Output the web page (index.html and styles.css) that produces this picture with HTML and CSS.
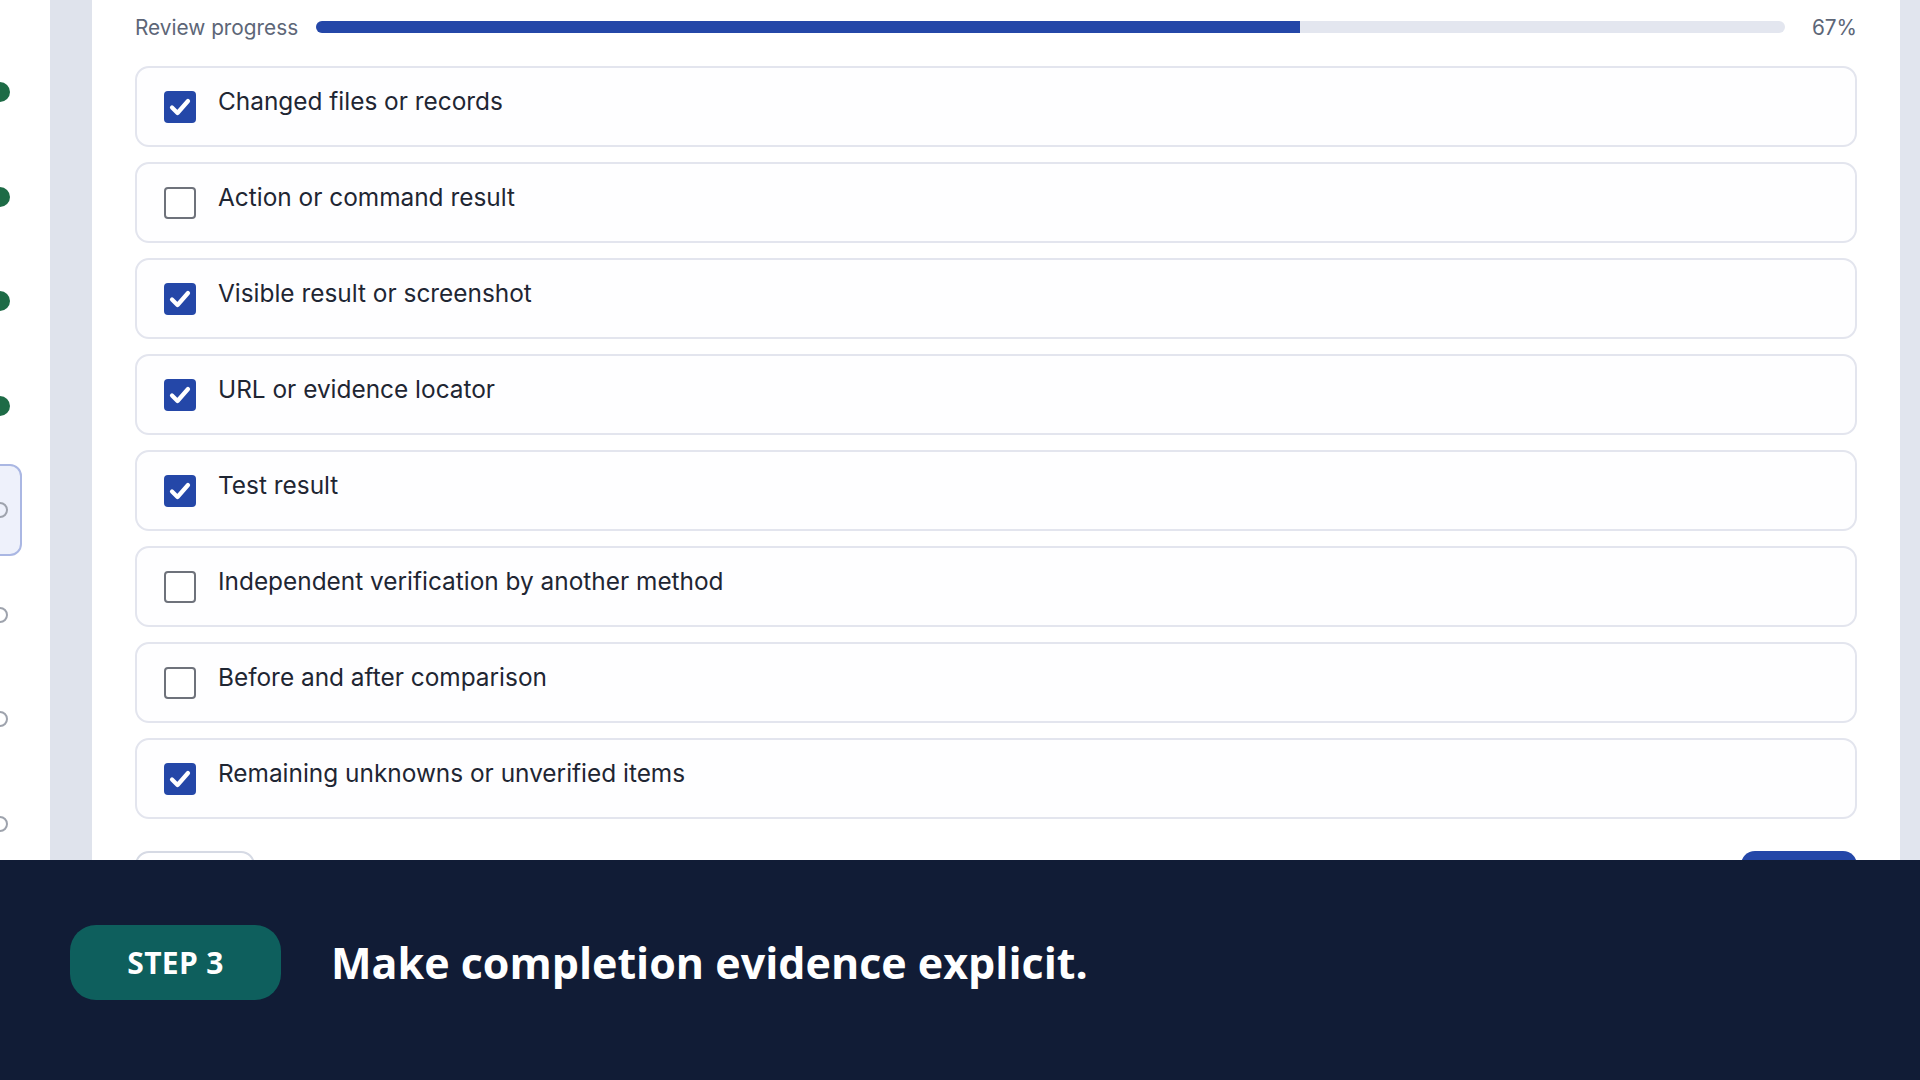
FILE: index.html
```html
<!DOCTYPE html>
<html>
<head>
<title>Completion evidence</title>
<link rel="stylesheet" href="styles.css">
</head>
<body>

<div class="app">
    <div class="rail">
        <div class="step done"><span class="dot"></span></div>
        <div class="step done"><span class="dot"></span></div>
        <div class="step done"><span class="dot"></span></div>
        <div class="step done"><span class="dot"></span></div>
        <div class="step active"><span class="dot"></span></div>
        <div class="step"><span class="dot"></span></div>
        <div class="step"><span class="dot"></span></div>
        <div class="step"><span class="dot"></span></div>
    </div>
    <div class="gutter"></div>

    <div class="main">
        <div class="progress">
            <span class="progress-label">Review progress</span>
            <div class="progress-track"><div class="progress-fill" style="width: 67%"></div></div>
            <span class="progress-value">67%</span>
        </div>

        <div class="checklist">
            <label class="check-row">
                <span class="box checked"><svg viewBox="0 0 32 32"><polyline points="8 16.5 13.5 22 24 10"/></svg></span>
                <span class="check-text">Changed files or records</span>
            </label>
            <label class="check-row">
                <span class="box"></span>
                <span class="check-text">Action or command result</span>
            </label>
            <label class="check-row">
                <span class="box checked"><svg viewBox="0 0 32 32"><polyline points="8 16.5 13.5 22 24 10"/></svg></span>
                <span class="check-text">Visible result or screenshot</span>
            </label>
            <label class="check-row">
                <span class="box checked"><svg viewBox="0 0 32 32"><polyline points="8 16.5 13.5 22 24 10"/></svg></span>
                <span class="check-text">URL or evidence locator</span>
            </label>
            <label class="check-row">
                <span class="box checked"><svg viewBox="0 0 32 32"><polyline points="8 16.5 13.5 22 24 10"/></svg></span>
                <span class="check-text">Test result</span>
            </label>
            <label class="check-row">
                <span class="box"></span>
                <span class="check-text">Independent verification by another method</span>
            </label>
            <label class="check-row">
                <span class="box"></span>
                <span class="check-text">Before and after comparison</span>
            </label>
            <label class="check-row">
                <span class="box checked"><svg viewBox="0 0 32 32"><polyline points="8 16.5 13.5 22 24 10"/></svg></span>
                <span class="check-text">Remaining unknowns or unverified items</span>
            </label>
        </div>

        <div class="actions">
            <button class="btn btn-back" aria-label="Back"></button>
            <button class="btn btn-next" aria-label="Next"></button>
        </div>
    </div>
    <div class="gutter-right"></div>
</div>

<div class="caption">
    <span class="step-badge">STEP 3</span>
    <span class="caption-text">Make completion evidence explicit.</span>
</div>

</body>
</html>
```

FILE: styles.css
```css
body {
    margin: 0;
    padding: 0;
    width: 1920px;
    height: 1080px;
    overflow: hidden;
    background-color: #ffffff;
    font-family: Inter, 'Noto Sans', sans-serif;
}
.app {
    display: flex;
    height: 860px;
    overflow: hidden;
}
.rail {
    width: 50px;
    flex: none;
    overflow: hidden;
    display: flex;
    flex-direction: column;
    gap: 12.5px;
    padding-top: 46px;
    box-sizing: border-box;
    background-color: #ffffff;
}
.step {
    flex: none;
    height: 92px;
    width: 82px;
    margin-left: -60px;
    padding-left: 48px;
    box-sizing: border-box;
    display: flex;
    align-items: center;
    border: 2px solid transparent;
    border-radius: 12px;
}
.step .dot {
    width: 16px;
    height: 16px;
    box-sizing: border-box;
    border: 2px solid #9ea3ad;
    border-radius: 50%;
    margin-left: 2px;
}
.step.done .dot {
    width: 20px;
    height: 20px;
    margin-left: 0;
    border: none;
    background-color: #1d6b46;
}
.step.active {
    background-color: #eef1fb;
    border-color: #aab7e3;
}
.gutter {
    width: 42px;
    flex: none;
    background-color: #dfe3ec;
}
.gutter-right {
    width: 20px;
    flex: none;
    background-color: #e1e5ee;
}
.main {
    flex: 1;
    padding: 12px 43px 0;
    background-color: #ffffff;
}
.progress {
    display: flex;
    align-items: center;
    gap: 18px;
    height: 30px;
}
.progress-label {
    font-size: 20.8px;
    color: #5d6677;
}
.progress-track {
    flex: 1;
    height: 12px;
    border-radius: 6px;
    background-color: #e3e6ef;
    overflow: hidden;
}
.progress-fill {
    height: 100%;
    background-color: #2447a8;
}
.progress-value {
    width: 54px;
    text-align: right;
    font-size: 20.8px;
    color: #5d6677;
}
.checklist {
    margin-top: 24px;
    display: flex;
    flex-direction: column;
    gap: 15px;
}
.check-row {
    height: 81px;
    box-sizing: border-box;
    border: 2px solid #e3e5ee;
    border-radius: 14px;
    padding: 17px 27px 0;
    display: flex;
    align-items: flex-start;
    gap: 22px;
    background-color: #fefeff;
}
.box {
    flex: none;
    width: 32px;
    height: 32px;
    margin-top: 6px;
    box-sizing: border-box;
    border: 2px solid #6e727b;
    border-radius: 4px;
    background-color: #ffffff;
}
.box.checked {
    border: none;
    background-color: #2447a8;
}
.box svg {
    display: block;
    width: 32px;
    height: 32px;
    fill: none;
    stroke: #ffffff;
    stroke-width: 4.2;
    stroke-linecap: round;
    stroke-linejoin: round;
}
.check-text {
    font-size: 24.4px;
    line-height: 33.6px;
    color: #1f2633;
}
.actions {
    margin-top: 32px;
    display: flex;
    justify-content: space-between;
}
.btn {
    height: 52px;
    border-radius: 14px;
}
.btn-back {
    width: 120px;
    background-color: #ffffff;
    border: 2px solid #d6dae4;
}
.btn-next {
    width: 116px;
    background-color: #2447a8;
    border: none;
}
.caption {
    height: 220px;
    box-sizing: border-box;
    padding: 0 70px 15px;
    display: flex;
    align-items: center;
    gap: 50px;
    background-color: #111c36;
    font-family: 'Open Sans', 'Noto Sans', sans-serif;
}
.step-badge {
    width: 211px;
    height: 75px;
    border-radius: 26px;
    background-color: #0e5f5d;
    color: #ffffff;
    font-size: 30px;
    font-weight: 700;
    letter-spacing: 0.3px;
    display: flex;
    align-items: center;
    justify-content: center;
}
.caption-text {
    color: #ffffff;
    font-size: 43px;
    font-weight: 700;
}
```
